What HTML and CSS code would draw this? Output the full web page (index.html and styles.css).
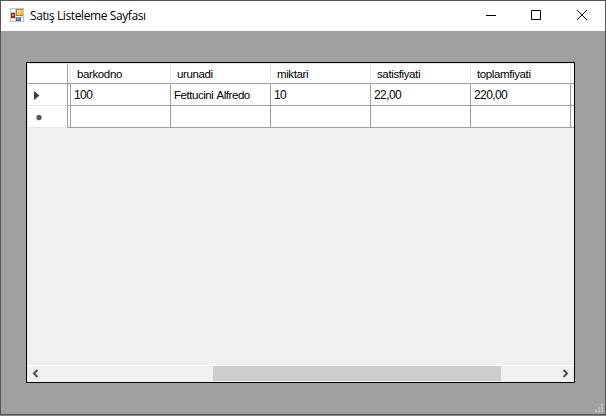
FILE: index.html
```html
<!DOCTYPE html>
<html lang="tr">
<head>
<meta charset="utf-8">
<title>Satış Listeleme Sayfası</title>
<link rel="stylesheet" href="styles.css">
</head>
<body>
<div class="window">
  <header class="titlebar">
    <svg class="app-icon" width="14" height="14" viewBox="0 0 14 14" shape-rendering="crispEdges">
      <defs>
        <linearGradient id="gold" x2="1" y2="1"><stop stop-color="#fff0a0"/><stop offset="1" stop-color="#e9a90c"/></linearGradient>
        <linearGradient id="blue" x2="1" y2="1"><stop stop-color="#8dbcf8"/><stop offset="1" stop-color="#2868d0"/></linearGradient>
      </defs>
      <path fill="#fff" stroke="#c4c4c4" d="M.5.5h13v13H.5zM.5 4.5h5M.5 9.5h13M5.500.5v13"/>
      <path fill="#a81c1c" d="M1 5h4v5H1z"/><path fill="#e88378" d="M2 6h2v2H2z"/>
      <path fill="#b88215" d="M6 1h7v7H6z"/><path fill="url(#gold)" d="M7 2h6v5H7z"/>
      <path fill="#3e70bd" d="M6 9h5v4H6z"/><path fill="url(#blue)" d="M7 9h4v3H7z"/>
    </svg>
    <h1 class="title">Satış Listeleme Sayfası</h1>
    <div class="controls">
      <svg width="46" height="29" viewBox="0 0 46 29"><path d="M18 14.500h10"/></svg>
      <svg width="46" height="29" viewBox="0 0 46 29"><path d="M17.500 9.500h9v9h-9z"/></svg>
      <svg width="46" height="29" viewBox="0 0 46 29"><path d="M17 9l10 10M27 9l-10 10"/></svg>
    </div>
  </header>
  <main class="client">
    <div class="datagrid">
      <div class="row head">
        <div class="rowhead"></div><div class="gap"></div>
        <div class="cell">barkodno</div><div class="cell">urunadi</div><div class="cell">miktari</div><div class="cell">satisfiyati</div><div class="cell">toplamfiyati</div><div class="rest"></div>
      </div>
      <div class="row">
        <div class="rowhead"><svg width="40" height="21" viewBox="0 0 40 21"><path fill="#404040" d="M7 7l5.500 4.500L7 16z"/></svg></div><div class="gap"></div>
        <div class="cell">100</div><div class="cell product">Fettucini Alfredo</div><div class="cell">10</div><div class="cell">22,00</div><div class="cell">220,00</div><div class="rest"></div>
      </div>
      <div class="row">
        <div class="rowhead"><svg width="40" height="21" viewBox="0 0 40 21"><circle cx="12" cy="11.500" r="2.500" fill="#404040"/><path stroke="#606060" stroke-width=".8" d="M9 11.500h6M12 8.500v6M10 9.500l4 4M14 9.500l-4 4"/></svg></div><div class="gap"></div>
        <div class="cell"></div><div class="cell"></div><div class="cell"></div><div class="cell"></div><div class="cell"></div><div class="rest"></div>
      </div>
      <div class="scrollbar">
        <svg width="17" height="16" viewBox="0 0 17 16"><path d="M10.500 4L7 7.500l3.500 3.500"/></svg>
        <div class="track"><div class="thumb"></div></div>
        <svg width="17" height="16" viewBox="0 0 17 16"><path d="M6.500 4L10 7.500 6.500 11"/></svg>
      </div>
    </div>
    <svg class="grip" width="8" height="8" viewBox="0 0 8 8" shape-rendering="crispEdges"><path fill="#c3c3c3" d="M6 0h2v2H6zM3 3h2v2H3zM6 3h2v2H6zM0 6h2v2H0zM3 6h2v2H3zM6 6h2v2H6z"/></svg>
  </main>
</div>
</body>
</html>
```
FILE: styles.css
```css
* { box-sizing: border-box; }
body { margin: 0; background: #858585; overflow: hidden; }
svg { display: block; flex: none; }
.window {
  width: 606px; height: 415px;
  border: 1px solid #555;
  display: flex; flex-direction: column;
  background: #a0a0a0;
}
.titlebar { height: 30px; background: #fff; display: flex; padding-left: 9px; flex: none; }
.app-icon { margin-top: 7px; }
.title {
  margin: 0 0 0 6px; white-space: nowrap;
  font: 400 12px/29px "Open Sans", "Noto Sans", sans-serif;
  letter-spacing: -0.4px; color: #000;
}
.controls { display: flex; margin-left: auto; margin-right: -1px; }
.controls path { fill: none; stroke: #000; stroke-width: 1; }
.client { flex: 1; position: relative; padding: 31px 25px; }
.datagrid {
  width: 549px; height: 321px;
  border: 1px solid #000; background: #f0f0f0;
  display: flex; flex-direction: column; overflow: hidden;
  font: 12px/22px "Liberation Sans", Arial, sans-serif;
  letter-spacing: -0.6px; color: #000;
}
.row {
  display: grid; flex: none;
  grid-template-columns: 41px 3px repeat(5, 100px) 3px;
  height: 22px; background: #fff;
}
.row > div { border-right: 1px solid #a0a0a0; border-bottom: 1px solid #a0a0a0; }
.row > .rest { border-right: 0; }
.row > .rowhead { border-bottom-color: #e5e5e5; }
.cell { padding-left: 3px; white-space: nowrap; overflow: hidden; }
.product { font-size: 11.5px; letter-spacing: -0.45px; word-spacing: 1px; }
.head { height: 21px; font-size: 11.5px; line-height: 20px; letter-spacing: -0.38px; border-top: 1px solid #e5e5e5; }
.head > .cell, .head > .gap { border-right-color: #e5e5e5; }
.head > .rowhead { border-bottom-color: #a0a0a0; }
.head > .cell { padding-left: 6px; }
.rowhead { border-left: 1px solid #e5e5e5; }
.rowhead svg { margin-left: -1px; }
.scrollbar {
  margin-top: auto; height: 17px; flex: none;
  border-top: 1px solid #fff; display: flex;
}
.scrollbar path { fill: none; stroke: #505050; stroke-width: 2; }
.track { flex: 1; padding-left: 169px; }
.thumb { width: 288px; height: 15px; background: #cdcdcd; }
.grip { position: absolute; right: 2px; bottom: 2px; }
```
